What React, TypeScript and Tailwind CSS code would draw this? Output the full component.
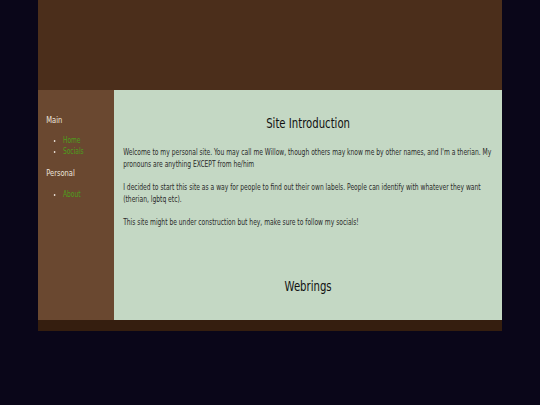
export default function App() {
  const font = { fontFamily: '"DejaVu Sans Condensed", "Liberation Sans", sans-serif' };
  return (
    <div className="min-h-[405px] w-full overflow-hidden bg-[#0a0619]" style={font}>
      <div className="mx-auto w-[464px]">
        <header className="h-[90px] bg-[#4b2e1b]" />

        <div className="flex h-[230px]">
          <aside className="w-[76px] shrink-0 overflow-hidden bg-[#6a4830]">
            <div className="w-[93px] origin-left scale-x-[0.83] px-[10px] pt-[24px] text-[#ece4dc]">
              <h3 className="text-[9px] leading-[12px]">Main</h3>
              <ul className="mt-[9px] list-disc pl-[20px] text-[8px] leading-[11px] text-[#4d9f1c] marker:text-[#ece4dc]">
                <li>Home</li>
                <li>Socials</li>
              </ul>
              <h3 className="mt-[10px] text-[9px] leading-[12px]">Personal</h3>
              <ul className="mt-[10px] list-disc pl-[20px] text-[8px] leading-[11px] text-[#4d9f1c] marker:text-[#ece4dc]">
                <li>About</li>
              </ul>
            </div>
          </aside>

          {/* main */}
          <main className="flex-1 overflow-hidden bg-[#c4d8c4]">
            <div className="w-[466px] origin-left scale-x-[0.833] px-[11px] pt-[24px] text-[#2a2a2a]">
              <h2 className="text-center text-[13.5px] leading-[18px] text-[#111]">Site Introduction</h2>
              <p className="mt-[15px] text-[8px] leading-[12px]">
                Welcome to my personal site. You may call me Willow, though others may know me by other names, and I'm a therian. My pronouns are anything EXCEPT from he/him
              </p>
              <p className="mt-[11px] text-[8px] leading-[12px]">
                I decided to start this site as a way for people to find out their own labels. People can identify with whatever they want (therian, lgbtq etc).
              </p>
              <p className="mt-[11px] text-[8px] leading-[12px]">
                This site might be under construction but hey, make sure to follow my socials!
              </p>
              <h2 className="mt-[48px] text-center text-[13.5px] leading-[18px] text-[#111]">Webrings</h2>
            </div>
          </main>
        </div>

        <footer className="h-[11px] bg-[#351e0f]" />
      </div>
    </div>
  );
}
